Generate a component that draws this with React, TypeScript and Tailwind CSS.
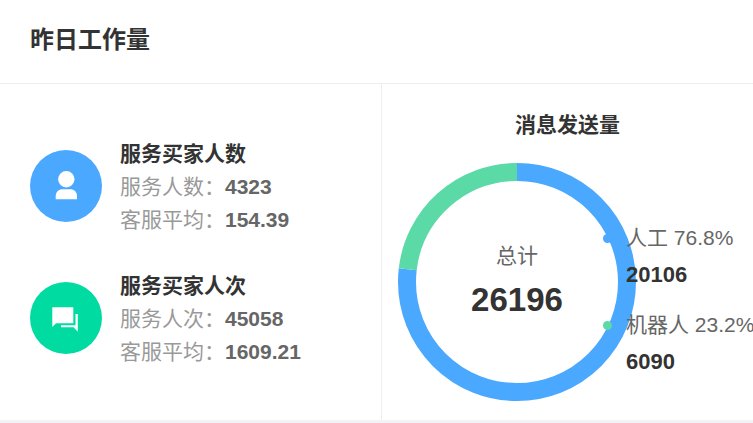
const cjk = "font-['Liberation_Sans','Noto_Sans_CJK_SC',sans-serif]";

function Stat({ color, icon, title, rows }: { color: string; icon: React.ReactNode; title: string; rows: [string, string][] }) {
  return (
    <div className="flex items-center gap-[18px]">
      <div className={`flex h-[72px] w-[72px] items-center justify-center rounded-full ${color}`}>{icon}</div>
      <div className="flex flex-col text-[21px] leading-[33px]">
        <div className="font-bold text-[#333]">{title}</div>
        {rows.map(([k, v]) => (
          <div key={k} className="text-[#999]">
            {k}：<span className="font-bold text-[#666]">{v}</span>
          </div>
        ))}
      </div>
    </div>
  );
}

function Donut() {
  const r = 110;
  const c = 2 * Math.PI * r;
  return (
    <svg width="238" height="238" viewBox="0 0 238 238" className="block">
      <g transform="rotate(-90 119 119)" fill="none" strokeWidth="18">
        <circle cx="119" cy="119" r={r} stroke="#4aa8ff" strokeDasharray={`${c * 0.768} ${c}`} />
        <circle cx="119" cy="119" r={r} stroke="#5bd9a6" strokeDasharray={`${c * 0.232} ${c}`} strokeDashoffset={-c * 0.768} />
      </g>
    </svg>
  );
}

function Legend({ color, label, value }: { color: string; label: string; value: string }) {
  return (
    <div className="flex gap-[14px]">
      <div className={`mt-[15px] h-[9px] w-[9px] rounded-full ${color}`} />
      <div className="flex flex-col leading-[37px] whitespace-nowrap">
        <div className="text-[21px] text-[#666]">{label}</div>
        <div className="text-[22px] font-bold text-[#333]">{value}</div>
      </div>
    </div>
  );
}

export default function App() {
  return (
    <div className={`flex h-[423px] w-[753px] flex-col overflow-hidden bg-[#f2f3f7] ${cjk}`}>
      <div className="flex h-[420px] flex-col bg-white">
        <div className="flex h-[84px] shrink-0 items-center border-b border-[#eeeeee] pb-[4px] pl-[30px] text-[24px] font-bold text-[#333]">
          昨日工作量
        </div>
        <div className="flex min-h-0 flex-1">
          <div className="flex w-[382px] shrink-0 flex-col justify-center gap-[33px] border-r border-[#eeeeee] pl-[30px]">
            <Stat
              color="bg-[#4aa8ff]"
              title="服务买家人数"
              rows={[["服务人数", "4323"], ["客服平均", "154.39"]]}
              icon={
                <svg width="72" height="72" viewBox="0 0 72 72" fill="#fff">
                  <circle cx="36.3" cy="29.3" r="8.2" />
                  <path d="M25.7 49.3V46c0-4 3.3-6.7 6.7-6.7h8c3.4 0 6.6 2.7 6.6 6.7v3.3z" />
                </svg>
              }
            />
            <Stat
              color="bg-[#00dba2]"
              title="服务买家人次"
              rows={[["服务人次", "45058"], ["客服平均", "1609.21"]]}
              icon={
                <svg width="72" height="72" viewBox="0 0 72 72" fill="#fff">
                  <path d="M22.3 25.3h21v16H26l-3.7 3.7z" />
                  <path d="M31 43.2h14.5V32h2.3v17.7L43.6 45.2H31z" />
                </svg>
              }
            />
          </div>
          <div className="relative flex flex-1 flex-col">
            <div className="mt-[24px] text-center text-[21px] leading-[33px] font-bold text-[#333]">消息发送量</div>
            <div className="relative mt-[22px] ml-[16px] w-[238px]">
              <Donut />
              <div className="absolute inset-0 flex flex-col items-center pt-[75px]">
                <div className="text-[21px] leading-[36px] text-[#666]">总计</div>
                <div className="mt-[3px] text-[33px] leading-[46px] font-bold text-[#333]">26196</div>
              </div>
            </div>
            <div className="absolute top-[135px] left-[221px] flex flex-col gap-[13px]">
              <Legend color="bg-[#4aa8ff]" label="人工 76.8%" value="20106" />
              <Legend color="bg-[#5bd9a6]" label="机器人 23.2%" value="6090" />
            </div>
          </div>
        </div>
      </div>
    </div>
  );
}
